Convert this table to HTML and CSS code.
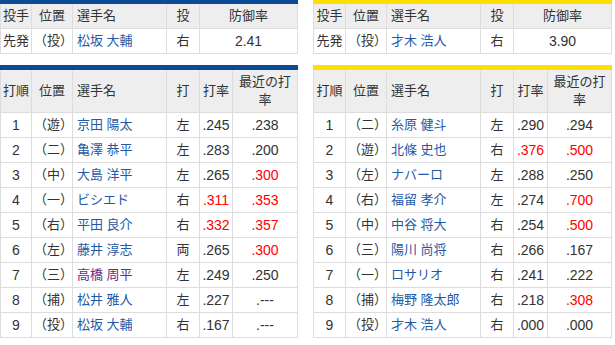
FILE: index.html
```html
<!DOCTYPE html>
<html lang="ja">
<head>
<meta charset="utf-8">
<link rel="stylesheet" href="styles.css">
</head>
<body>
<div class="page">
  <div class="side side-left">
    <div class="bar bar-blue"></div>
    <table class="tbl pitcher">
      <colgroup><col class="w1"><col class="w2"><col class="w3"><col class="w4"><col class="wera"></colgroup>
      <tr class="head"><td>投手</td><td>位置</td><td class="name">選手名</td><td>投</td><td>防御率</td></tr>
      <tr><td>先発</td><td>（投）</td><td class="name"><span class="link">松坂 大輔</span></td><td>右</td><td class="num">2.41</td></tr>
    </table>
    <div class="bar bar-blue bar-lineup"></div>
    <table class="tbl lineup">
      <colgroup><col class="w1"><col class="w2"><col class="w3"><col class="w4"><col class="w5"><col class="w6"></colgroup>
      <tr class="head"><td>打順</td><td>位置</td><td class="name">選手名</td><td>打</td><td>打率</td><td>最近の打率</td></tr>
      <tr><td class="num">1</td><td>（遊）</td><td class="name"><span class="link">京田 陽太</span></td><td>左</td><td class="num">.245</td><td class="num">.238</td></tr>
      <tr><td class="num">2</td><td>（二）</td><td class="name"><span class="link">亀澤 恭平</span></td><td>左</td><td class="num">.283</td><td class="num">.200</td></tr>
      <tr><td class="num">3</td><td>（中）</td><td class="name"><span class="link">大島 洋平</span></td><td>左</td><td class="num">.265</td><td class="num hot">.300</td></tr>
      <tr><td class="num">4</td><td>（一）</td><td class="name"><span class="link">ビシエド</span></td><td>右</td><td class="num hot">.311</td><td class="num hot">.353</td></tr>
      <tr><td class="num">5</td><td>（右）</td><td class="name"><span class="link">平田 良介</span></td><td>右</td><td class="num hot">.332</td><td class="num hot">.357</td></tr>
      <tr><td class="num">6</td><td>（左）</td><td class="name"><span class="link">藤井 淳志</span></td><td>両</td><td class="num">.265</td><td class="num hot">.300</td></tr>
      <tr><td class="num">7</td><td>（三）</td><td class="name"><span class="link visited">高橋 周平</span></td><td>左</td><td class="num">.249</td><td class="num">.250</td></tr>
      <tr><td class="num">8</td><td>（捕）</td><td class="name"><span class="link">松井 雅人</span></td><td>左</td><td class="num">.227</td><td class="num">.---</td></tr>
      <tr><td class="num">9</td><td>（投）</td><td class="name"><span class="link">松坂 大輔</span></td><td>右</td><td class="num">.167</td><td class="num">.---</td></tr>
    </table>
  </div>
  <div class="side side-right">
    <div class="bar bar-yellow"></div>
    <table class="tbl pitcher">
      <colgroup><col class="r1"><col class="w2"><col class="w3"><col class="w4"><col class="wera"></colgroup>
      <tr class="head"><td>投手</td><td>位置</td><td class="name">選手名</td><td>投</td><td>防御率</td></tr>
      <tr><td>先発</td><td>（投）</td><td class="name"><span class="link">才木 浩人</span></td><td>右</td><td class="num">3.90</td></tr>
    </table>
    <div class="bar bar-yellow bar-lineup"></div>
    <table class="tbl lineup">
      <colgroup><col class="r1"><col class="w2"><col class="w3"><col class="w4"><col class="r5"><col class="r6"></colgroup>
      <tr class="head"><td>打順</td><td>位置</td><td class="name">選手名</td><td>打</td><td>打率</td><td>最近の打率</td></tr>
      <tr><td class="num">1</td><td>（二）</td><td class="name"><span class="link">糸原 健斗</span></td><td>左</td><td class="num">.290</td><td class="num">.294</td></tr>
      <tr><td class="num">2</td><td>（遊）</td><td class="name"><span class="link">北條 史也</span></td><td>右</td><td class="num hot">.376</td><td class="num hot">.500</td></tr>
      <tr><td class="num">3</td><td>（左）</td><td class="name"><span class="link">ナバーロ</span></td><td>左</td><td class="num">.288</td><td class="num">.250</td></tr>
      <tr><td class="num">4</td><td>（右）</td><td class="name"><span class="link">福留 孝介</span></td><td>左</td><td class="num">.274</td><td class="num hot">.700</td></tr>
      <tr><td class="num">5</td><td>（中）</td><td class="name"><span class="link">中谷 将大</span></td><td>右</td><td class="num">.254</td><td class="num hot">.500</td></tr>
      <tr><td class="num">6</td><td>（三）</td><td class="name"><span class="link">陽川 尚将</span></td><td>右</td><td class="num">.266</td><td class="num">.167</td></tr>
      <tr><td class="num">7</td><td>（一）</td><td class="name"><span class="link">ロサリオ</span></td><td>右</td><td class="num">.241</td><td class="num">.222</td></tr>
      <tr><td class="num">8</td><td>（捕）</td><td class="name"><span class="link">梅野 隆太郎</span></td><td>右</td><td class="num">.218</td><td class="num hot">.308</td></tr>
      <tr><td class="num">9</td><td>（投）</td><td class="name"><span class="link">才木 浩人</span></td><td>右</td><td class="num">.000</td><td class="num">.000</td></tr>
    </table>
  </div>
</div>
</body>
</html>
```

FILE: styles.css
```css
html, body {
  margin: 0;
  padding: 0;
  background: #ffffff;
}

body {
  font-family: "Liberation Sans", "Noto Sans CJK JP", sans-serif;
  font-size: 13px;
  color: #333333;
}

.page {
  display: flex;
  gap: 15px;
  align-items: flex-start;
}

.side {
  display: flex;
  flex-direction: column;
}

.side-left {
  width: 298px;
}

.side-right {
  width: 299px;
}

.bar {
  height: 4px;
}

.bar-lineup {
  height: 5px;
  margin-top: 11px;
}

.bar-blue {
  background: #0b4b95;
}

.bar-yellow {
  background: #ffdf00;
}

.tbl {
  width: 100%;
  border-collapse: separate;
  border-spacing: 0;
  table-layout: fixed;
}

.tbl td {
  border-right: 1px solid #dddddd;
  border-bottom: 1px solid #dddddd;
  padding: 3px 2px;
  line-height: 18px;
  text-align: center;
  vertical-align: middle;
  white-space: normal;
  overflow: hidden;
}

.tbl td:first-child {
  border-left: 1px solid #dddddd;
}

.tbl .head td {
  background: #eeeeee;
}

.tbl td.name {
  text-align: left;
  padding-left: 4px;
  white-space: nowrap;
}

.tbl td.num {
  font-size: 14px;
}

.link {
  color: #1f5aa6;
}

.link.visited {
  color: #6a2a8e;
}

.hot {
  color: #ff0000;
}

.w1 { width: 32px; }
.r1 { width: 33px; }
.w2 { width: 41px; }
.w3 { width: 94px; }
.w4 { width: 33px; }
.w5 { width: 33px; }
.w6 { width: 65px; }
.r5 { width: 34px; }
.r6 { width: 64px; }
.wera { width: 98px; }
```
